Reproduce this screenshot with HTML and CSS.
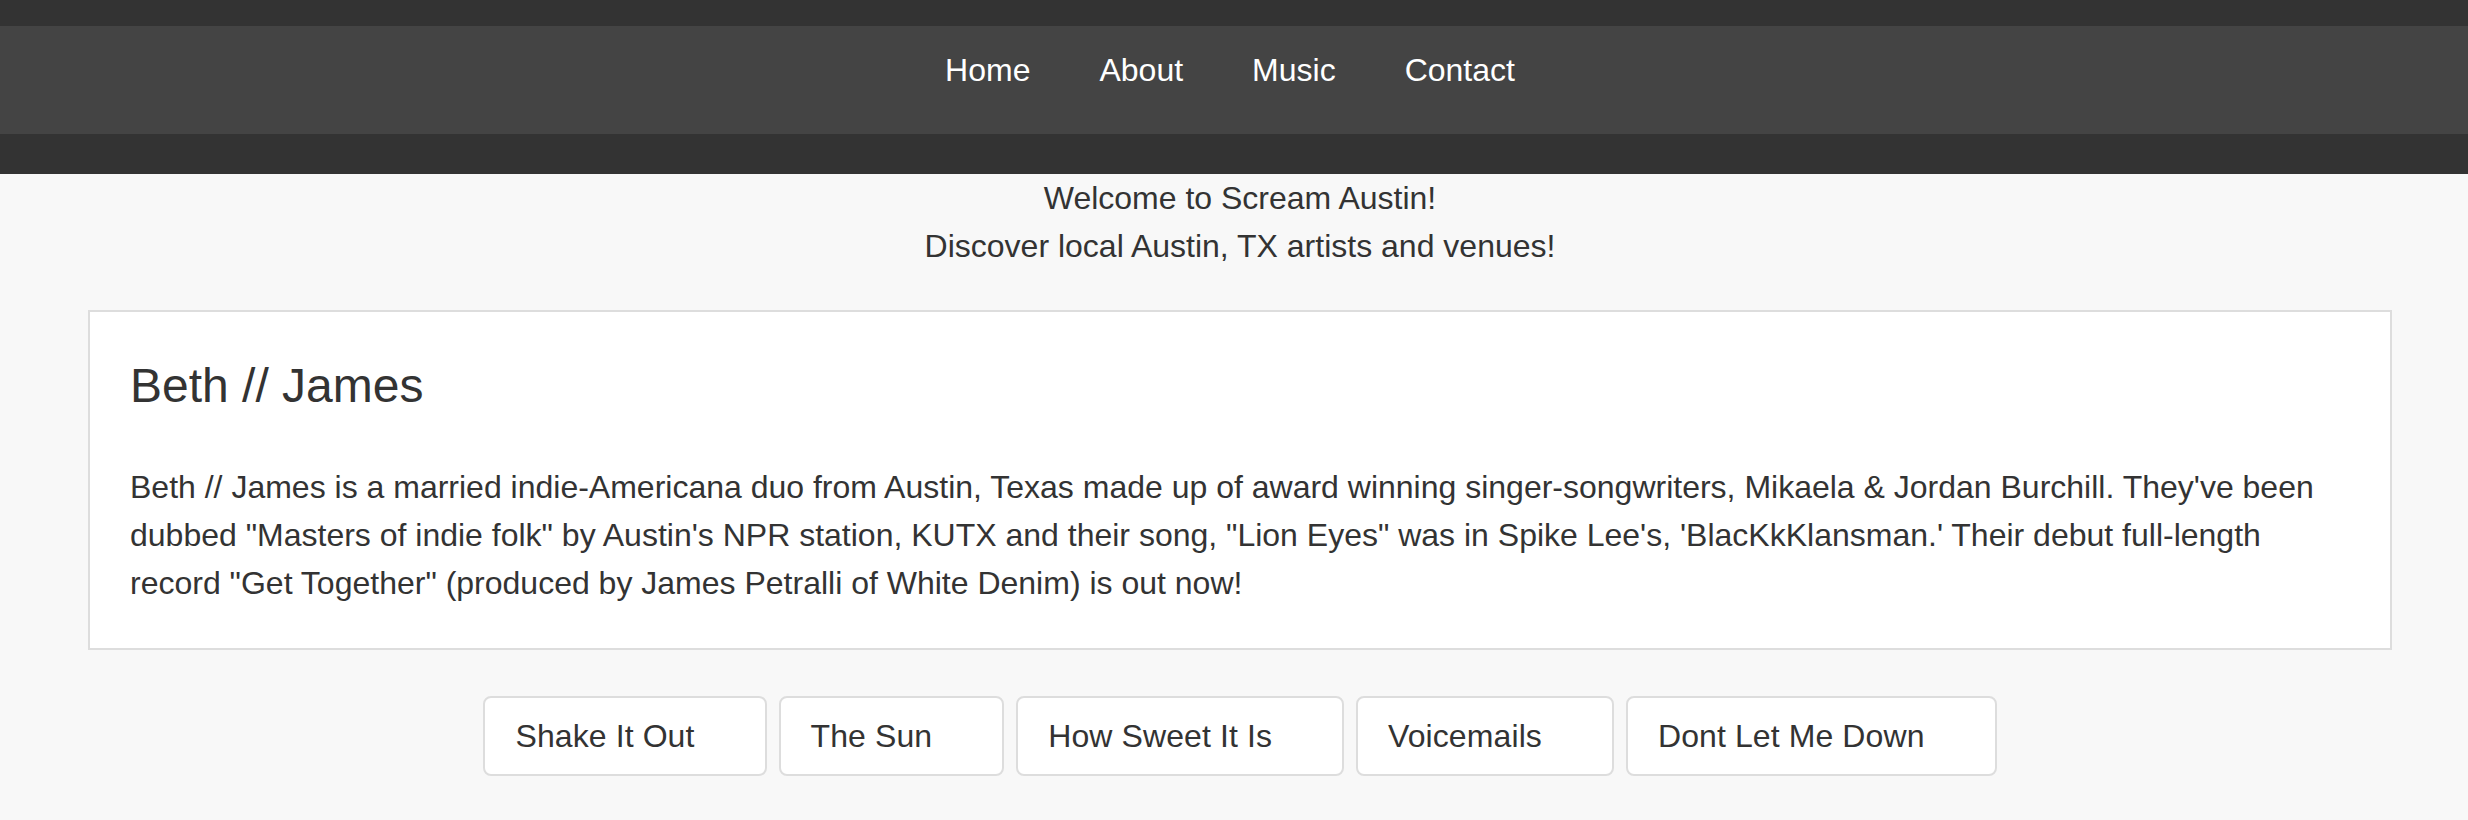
FILE: index.html
```html
<!DOCTYPE html>
<html lang="en">
<head>
<meta charset="utf-8">
<title>Scream Austin</title>
<link rel="stylesheet" href="styles.css">
</head>
<body>
<header class="site-header">
  <nav class="main-nav">
    <a class="nav-link" href="#">Home</a>
    <a class="nav-link" href="#">About</a>
    <a class="nav-link" href="#">Music</a>
    <a class="nav-link" href="#">Contact</a>
  </nav>
</header>
<main class="content">
  <div class="intro">
    <p class="intro-line">Welcome to Scream Austin!</p>
    <p class="intro-line">Discover local Austin, TX artists and venues!</p>
  </div>
  <section class="artist-card">
    <h2 class="artist-name">Beth // James</h2>
    <p class="artist-bio">Beth // James is a married indie-Americana duo from Austin, Texas made up of award winning singer-songwriters, Mikaela &amp; Jordan Burchill. They've been dubbed "Masters of indie folk" by Austin's NPR station, KUTX and their song, "Lion Eyes" was in Spike Lee's, 'BlacKkKlansman.' Their debut full-length record "Get Together" (produced by James Petralli of White Denim) is out now!</p>
  </section>
  <div class="songs">
    <button class="song-btn">Shake It Out</button>
    <button class="song-btn">The Sun</button>
    <button class="song-btn">How Sweet It Is</button>
    <button class="song-btn">Voicemails</button>
    <button class="song-btn">Dont Let Me Down</button>
  </div>
</main>
</body>
</html>
```
FILE: styles.css
```css
html, body {
  margin: 0;
  padding: 0;
}
body {
  background: #f8f8f8;
  color: #333;
  font-family: "Liberation Sans", Arial, sans-serif;
  font-size: 32px;
  height: 820px;
  overflow: hidden;
}
.site-header {
  background: #333;
  padding: 26px 0 40px;
}
.main-nav {
  background: #444;
  height: 108px;
  box-sizing: border-box;
  padding: 24px 8px 0 0;
  display: flex;
  justify-content: center;
  align-items: flex-start;
  gap: 69px;
}
.nav-link {
  color: #fff;
  text-decoration: none;
  line-height: 40px;
}
.content {
  margin: 0 76px 0 88px;
}
.intro {
  text-align: center;
}
.intro-line {
  margin: 0;
  line-height: 48px;
}
.artist-card {
  margin-top: 40px;
  background: #fff;
  border: 2px solid #ddd;
  padding: 38px 40px 41px;
}
.artist-name {
  margin: 0;
  font-size: 48px;
  font-weight: normal;
  line-height: 72px;
}
.artist-bio {
  margin: 41px 0 0;
  line-height: 48px;
}
.songs {
  margin-top: 46px;
  display: flex;
  justify-content: center;
  gap: 12px;
}
.song-btn {
  font-family: "Liberation Sans", Arial, sans-serif;
  font-size: 32px;
  line-height: 48px;
  color: #333;
  background: #fff;
  border: 2px solid #ddd;
  border-radius: 8px;
  padding: 14px 70px 14px 30px;
  letter-spacing: 0.1px;
  cursor: pointer;
}
```
